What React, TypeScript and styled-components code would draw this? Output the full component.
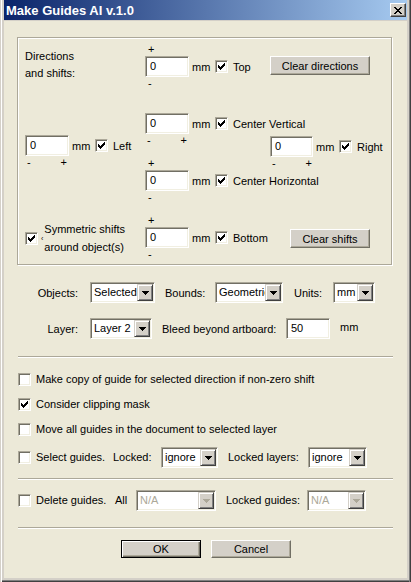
import React from "react";
import styled, { createGlobalStyle, css } from "styled-components";

const GlobalStyle = createGlobalStyle`
  html, body { margin: 0; padding: 0; }
  body {
    background: #ece9d8;
    font-family: "Liberation Sans", Arial, sans-serif;
    font-size: 11px;
    color: #000;
  }
  * { box-sizing: border-box; }
`;

const sunken = css`
  border: 1px solid;
  border-color: #aca899 #fff #fff #aca899;
  box-shadow: inset 1px 1px #716f64, inset -1px -1px #f1efe2;
`;

const raised = css`
  border: 1px solid;
  border-color: #fff #716f64 #716f64 #fff;
  box-shadow: inset -1px -1px #aca899;
`;

const Window = styled.div`
  width: 411px;
  height: 582px;
  background: #d4d0c8;
  padding: 0 4px 4px 4px;
  box-shadow: inset 1px 0 #d4d0c8, inset 2px 0 #fff, inset -1px 0 #404040,
    inset -2px 0 #808080, inset 0 -1px #404040, inset 0 -2px #808080;
  display: flex;
  flex-direction: column;
  overflow: hidden;
`;

const TitleBar = styled.div`
  height: 20px;
  flex: none;
  display: flex;
  align-items: center;
  justify-content: space-between;
  padding: 0 1px 0 1px;
  background: linear-gradient(to right, #0a246a, #a6caf0);
`;

const TitleText = styled.div`
  color: #fff;
  font-weight: bold;
  font-size: 13px;
  padding-left: 1px;
`;

const CloseButton = styled.div`
  width: 16px;
  height: 14px;
  background: #d4d0c8;
  border: 1px solid;
  border-color: #fff #404040 #404040 #fff;
  box-shadow: inset -1px -1px #808080;
  display: flex;
  align-items: center;
  justify-content: center;
  padding-right: 1px;
`;

const Client = styled.div`
  flex: 1;
  margin-top: 1px;
  background: #ece9d8;
  padding: 0 12px 0 13px;
  display: flex;
  flex-direction: column;
`;

const GroupBox = styled.div`
  margin-top: 16px;
  width: 375px;
  height: 228px;
  border: 1px solid #aca899;
  box-shadow: inset 1px 1px #fff, 1px 1px #fff;
  padding: 5px 0 0 7px;
  display: grid;
  grid-template-columns: 120px 125px 1fr;
`;

const Column = styled.div`
  display: flex;
  flex-direction: column;
  align-items: flex-start;
`;

const DirLabel = styled.div<{ $mt?: number }>`
  margin-top: ${(p) => p.$mt ?? 0}px;
  line-height: 17px;
`;

const FieldRow = styled.div<{ $mt?: number }>`
  margin-top: ${(p) => p.$mt ?? 0}px;
  height: 21px;
  display: flex;
  align-items: center;
`;

const NumInput = styled.div<{ $w?: number }>`
  ${sunken};
  width: ${(p) => p.$w ?? 44}px;
  height: 21px;
  flex: none;
  background: #fff;
  padding-left: 4px;
  line-height: 18px;
`;

const UnitText = styled.span`
  margin-left: 3px;
  width: 23px;
  flex: none;
`;

const CheckLabel = styled.span`
  margin-left: 5px;
  white-space: nowrap;
`;

const SignLine = styled.div<{ $mt?: number; $pair?: boolean }>`
  margin-top: ${(p) => p.$mt ?? 0}px;
  height: 13px;
  line-height: 13px;
  width: 44px;
  padding: 0 2px 0 ${(p) => (p.$pair ? 2 : 3)}px;
  display: flex;
  justify-content: space-between;
`;

const CheckBoxBox = styled.div`
  ${sunken};
  width: 13px;
  height: 13px;
  flex: none;
  background: #fff;
  display: flex;
  align-items: center;
  justify-content: center;
`;

const PushButton = styled.div<{ $w: number; $h?: number; $ml?: number; $mt?: number; $default?: boolean }>`
  width: ${(p) => p.$w}px;
  height: ${(p) => p.$h ?? 19}px;
  margin-left: ${(p) => p.$ml ?? 0}px;
  margin-top: ${(p) => p.$mt ?? 0}px;
  background: #d4d0c8;
  display: flex;
  align-items: center;
  justify-content: center;
  ${(p) =>
    p.$default
      ? css`
          border: 1px solid #000;
          box-shadow: inset 1px 1px #fff, inset -1px -1px #716f64, inset -2px -2px #aca899;
        `
      : raised};
`;

const SymRow = styled.div<{ $mt?: number }>`
  margin-top: ${(p) => p.$mt ?? 0}px;
  display: flex;
  align-items: center;
`;

const SmallMark = styled.span`
  font-size: 7px;
  margin: 0 1px 0 3px;
  align-self: center;
`;

const SymLabel = styled.div`
  line-height: 18px;
`;

const FormRow = styled.div<{ $mt?: number }>`
  margin-top: ${(p) => p.$mt ?? 0}px;
  height: 21px;
  display: flex;
  align-items: center;
`;

const Label = styled.span<{ $w: number; $ml?: number; $right?: boolean }>`
  width: ${(p) => p.$w}px;
  margin-left: ${(p) => p.$ml ?? 0}px;
  text-align: ${(p) => (p.$right ? "right" : "left")};
  padding-right: ${(p) => (p.$right ? 12 : 0)}px;
  white-space: nowrap;
  flex: none;
`;

const RaisedUnit = styled.span`
  margin-left: 10px;
  margin-bottom: 4px;
`;

const SelectBox = styled.div<{ $w: number }>`
  ${sunken};
  width: ${(p) => p.$w}px;
  height: 21px;
  flex: none;
  background: #fff;
  padding: 1px;
  display: flex;
`;

const SelectText = styled.div<{ $disabled?: boolean }>`
  flex: 1;
  min-width: 0;
  overflow: hidden;
  white-space: nowrap;
  padding-left: 2px;
  line-height: 17px;
  color: ${(p) => (p.$disabled ? "#aca899" : "#000")};
`;

const ArrowButton = styled.div`
  width: 16px;
  height: 17px;
  flex: none;
  background: #d4d0c8;
  border: 1px solid;
  border-color: #d4d0c8 #404040 #404040 #d4d0c8;
  box-shadow: inset 1px 1px #fff, inset -1px -1px #808080;
  display: flex;
  align-items: center;
  justify-content: center;
`;

const Separator = styled.div<{ $mt: number }>`
  margin-top: ${(p) => p.$mt}px;
  margin-left: 1px;
  width: 375px;
  height: 2px;
  flex: none;
  border-top: 1px solid #aca899;
  border-bottom: 1px solid #fff;
`;

const CheckRow = styled.div<{ $mt: number; $h?: number }>`
  margin-top: ${(p) => p.$mt}px;
  height: ${(p) => p.$h ?? 13}px;
  padding-left: 1px;
  display: flex;
  align-items: center;
  line-height: 13px;
`;

const ButtonRow = styled.div`
  margin-top: 11px;
  display: flex;
  justify-content: center;
  gap: 10px;
`;

const CHECK = [
  "......#",
  ".....##",
  "#...###",
  "##.###.",
  "#####..",
  ".###...",
  "..#....",
];

const ARROW = ["#######", ".#####.", "..###..", "...#..."];

const CLOSE_X = [
  "##....##",
  ".##..##.",
  "..####..",
  "...##...",
  "..####..",
  ".##..##.",
  "##....##",
];

const PixelGlyph: React.FC<{ rows: string[]; color: string }> = ({ rows, color }) => (
  <svg width={rows[0].length} height={rows.length} shapeRendering="crispEdges" style={{ display: "block" }}>
    {rows.flatMap((r, y) =>
      r.split("").map((c, x) =>
        c === "#" ? <rect key={`${x}-${y}`} x={x} y={y} width={1} height={1} fill={color} /> : null
      )
    )}
  </svg>
);

const Check: React.FC<{ checked?: boolean }> = ({ checked }) => (
  <CheckBoxBox>{checked && <PixelGlyph rows={CHECK} color="#000" />}</CheckBoxBox>
);

const Select: React.FC<{ w: number; value: string; disabled?: boolean }> = ({ w, value, disabled }) => (
  <SelectBox $w={w}>
    <SelectText $disabled={disabled}>{value}</SelectText>
    <ArrowButton>
      <PixelGlyph rows={ARROW} color={disabled ? "#aca899" : "#000"} />
    </ArrowButton>
  </SelectBox>
);

const Field: React.FC<{ label: string; mt?: number; w?: number }> = ({ label, mt, w }) => (
  <FieldRow $mt={mt}>
    <NumInput $w={w}>0</NumInput>
    <UnitText>mm</UnitText>
    <Check checked />
    <CheckLabel>{label}</CheckLabel>
  </FieldRow>
);

const PairSigns: React.FC = () => (
  <SignLine $pair>
    <span>-</span>
    <span>+</span>
  </SignLine>
);

export default function App() {
  return (
    <>
      <GlobalStyle />
      <Window>
        <TitleBar>
          <TitleText>Make Guides AI v.1.0</TitleText>
          <CloseButton>
            <PixelGlyph rows={CLOSE_X} color="#000" />
          </CloseButton>
        </TitleBar>
        <Client>
          <GroupBox>
            <Column>
              <DirLabel $mt={5}>
                Directions
                <br />
                and shifts:
              </DirLabel>
              <Field label="Left" mt={53} />
              <PairSigns />
              <SymRow $mt={51}>
                <Check checked />
                <SmallMark>‹</SmallMark>
                <SymLabel>
                  Symmetric shifts
                  <br />
                  around object(s)
                </SymLabel>
              </SymRow>
            </Column>
            <Column>
              <SignLine>+</SignLine>
              <Field label="Top" />
              <SignLine>-</SignLine>
              <Field label="Center Vertical" mt={23} />
              <PairSigns />
              <SignLine $mt={10}>+</SignLine>
              <Field label="Center Horizontal" />
              <SignLine>-</SignLine>
              <SignLine $mt={10}>+</SignLine>
              <Field label="Bottom" />
              <SignLine>-</SignLine>
            </Column>
            <Column>
              <PushButton $w={100} $mt={13}>
                Clear directions
              </PushButton>
              <Field label="Right" mt={61} w={43} />
              <PairSigns />
              <PushButton $w={80} $ml={20} $mt={59}>
                Clear shifts
              </PushButton>
            </Column>
          </GroupBox>

          <FormRow $mt={17}>
            <Label $w={73} $right>
              Objects:
            </Label>
            <Select w={65} value="Selected objects" />
            <Label $w={50} $ml={10}>
              Bounds:
            </Label>
            <Select w={68} value="Geometric bounds" />
            <Label $w={39} $ml={11}>
              Units:
            </Label>
            <Select w={42} value="mm" />
          </FormRow>
          <FormRow $mt={15}>
            <Label $w={73} $right>
              Layer:
            </Label>
            <Select w={62} value="Layer 2" />
            <Label $w={124} $ml={10}>
              Bleed beyond artboard:
            </Label>
            <NumInput>50</NumInput>
            <RaisedUnit>mm</RaisedUnit>
          </FormRow>

          <Separator $mt={17} />

          <CheckRow $mt={15}>
            <Check />
            <CheckLabel>Make copy of guide for selected direction if non-zero shift</CheckLabel>
          </CheckRow>
          <CheckRow $mt={12}>
            <Check checked />
            <CheckLabel>Consider clipping mask</CheckLabel>
          </CheckRow>
          <CheckRow $mt={12}>
            <Check />
            <CheckLabel>Move all guides in the document to selected layer</CheckLabel>
          </CheckRow>
          <CheckRow $mt={11} $h={21}>
            <Check />
            <Label $w={77} $ml={5}>
              Select guides.
            </Label>
            <Label $w={48}>Locked:</Label>
            <Select w={57} value="ignore" />
            <Label $w={80} $ml={10}>
              Locked layers:
            </Label>
            <Select w={59} value="ignore" />
          </CheckRow>

          <Separator $mt={10} />

          <CheckRow $mt={10} $h={21}>
            <Check />
            <Label $w={79} $ml={5}>
              Delete guides.
            </Label>
            <Label $w={21}>All</Label>
            <Select w={80} value="N/A" disabled />
            <Label $w={81} $ml={10}>
              Locked guides:
            </Label>
            <Select w={59} value="N/A" disabled />
          </CheckRow>

          <Separator $mt={16} />

          <ButtonRow>
            <PushButton $w={80} $h={18} $default>
              OK
            </PushButton>
            <PushButton $w={80} $h={18}>
              Cancel
            </PushButton>
          </ButtonRow>
        </Client>
      </Window>
    </>
  );
}
